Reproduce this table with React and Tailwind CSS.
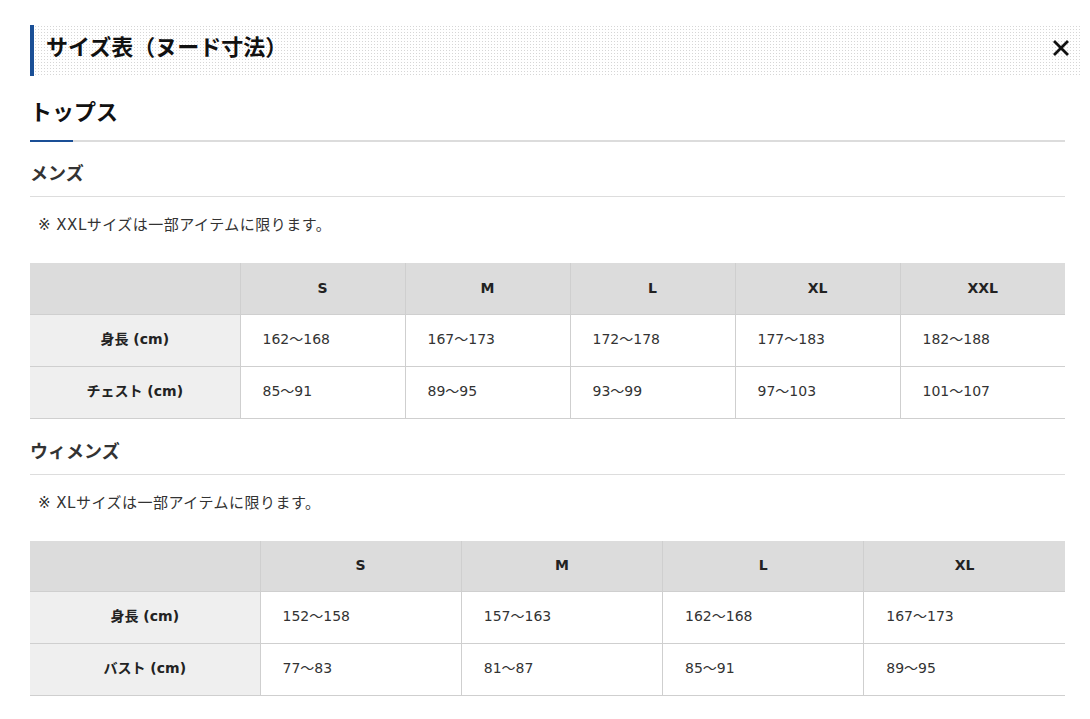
import React from 'react'

const font = 'font-["DejaVu_Sans","Noto_Sans_CJK_JP",sans-serif]'

const mens = {
  note: '※ XXLサイズは一部アイテムに限ります。',
  firstCol: 'w-[210px]',
  sizes: ['S', 'M', 'L', 'XL', 'XXL'],
  rows: [
    { label: '身長 (cm)', values: ['162～168', '167～173', '172～178', '177～183', '182～188'] },
    { label: 'チェスト (cm)', values: ['85～91', '89～95', '93～99', '97～103', '101～107'] },
  ],
}

const womens = {
  note: '※ XLサイズは一部アイテムに限ります。',
  firstCol: 'w-[230px]',
  sizes: ['S', 'M', 'L', 'XL'],
  rows: [
    { label: '身長 (cm)', values: ['152～158', '157～163', '162～168', '167～173'] },
    { label: 'バスト (cm)', values: ['77～83', '81～87', '85～91', '89～95'] },
  ],
}

const SizeTable = ({ data }) => (
  <table className="mt-[28px] w-full table-fixed border-collapse text-[14px] text-[#333]">
    <colgroup>
      <col className={data.firstCol} />
      {data.sizes.map((s) => (
        <col key={s} />
      ))}
    </colgroup>
    <thead>
      <tr className="h-[51px] bg-[#dcdcdc]">
        <th className="border-b border-[#cfcfcf]"></th>
        {data.sizes.map((s) => (
          <th key={s} className="border-b border-l border-[#cfcfcf] text-center font-bold text-[#222]">
            {s}
          </th>
        ))}
      </tr>
    </thead>
    <tbody>
      {data.rows.map((row) => (
        <tr key={row.label} className="h-[52px]">
          <th className="border-b border-[#cfcfcf] bg-[#efefef] pb-[2px] text-center font-bold text-[#222]">
            {row.label}
          </th>
          {row.values.map((v, i) => (
            <td key={i} className="border-b border-l border-[#cfcfcf] bg-white pb-[2px] pl-[22px] text-left">
              {v}
            </td>
          ))}
        </tr>
      ))}
    </tbody>
  </table>
)

const Section = ({ title, data }) => (
  <div>
    <h3 className="mt-[20px] border-b border-[#dddddd] pb-[10px] text-[18px] leading-[24px] font-bold text-[#333]">
      {title}
    </h3>
    <p className="mt-[18px] pl-[8px] text-[15px] leading-[20px] tracking-[0.5px] text-[#333]">{data.note}</p>
    <SizeTable data={data} />
  </div>
)

const App = () => {
  return (
    <div className={`min-h-[719px] bg-white pt-[25px] pl-[30px] ${font}`}>
      {/* header band */}
      <div className="flex h-[51px] w-[1050px] items-center border-l-[4px] border-[#1a4f96] bg-[radial-gradient(circle,#d6d6d6_0.7px,transparent_0.8px)] bg-[length:3px_3px] pr-[9px] pl-[12px]">
        <h1 className="flex-1 pb-[6px] text-[22px] font-bold text-[#111]">サイズ表（ヌード寸法）</h1>
        <button className="mb-[6px] flex h-[20px] w-[20px] items-center justify-center">
          <svg width="16" height="16" viewBox="0 0 16 16">
            <path d="M2 2 L14 14 M14 2 L2 14" stroke="#111" strokeWidth="2.8" strokeLinecap="square" />
          </svg>
        </button>
      </div>

      <div className="w-[1035px]">
        {/* tops heading */}
        <div className="relative pt-[24px] pb-[14px]">
          <h2 className="text-[22px] leading-[26px] font-bold text-[#111]">トップス</h2>
          <div className="absolute bottom-[-2px] left-0 h-[2px] w-full bg-[#dcdcdc]"></div>
          <div className="absolute bottom-[-2px] left-0 h-[2px] w-[43px] bg-[#1a4f96]"></div>
        </div>
        <div className="h-[2px]"></div>

        <Section title="メンズ" data={mens} />
        <div className="h-[1px]"></div>
        <Section title="ウィメンズ" data={womens} />
      </div>
    </div>
  )
}

export default App
